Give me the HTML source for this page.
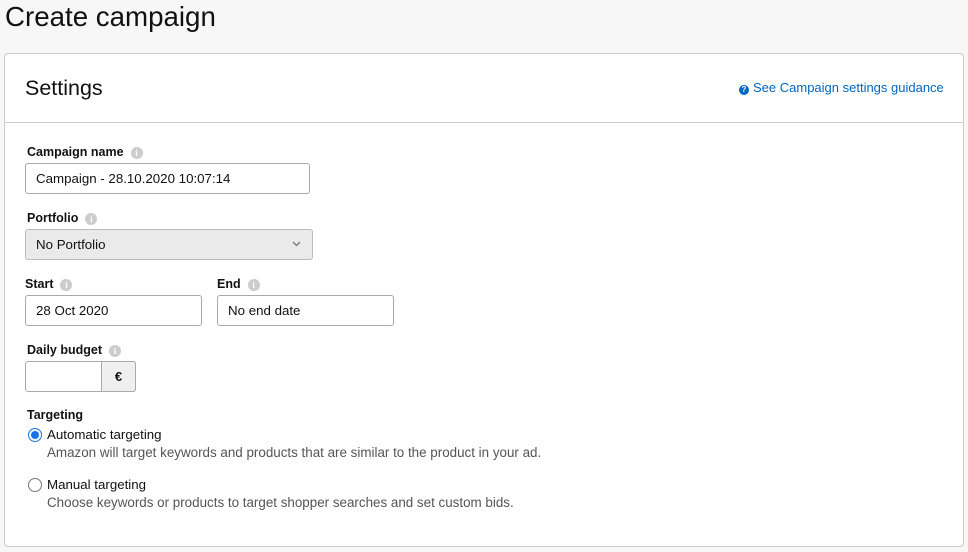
<!DOCTYPE html>
<html><head><style>
*{box-sizing:border-box;margin:0;padding:0}
body{width:968px;height:552px;background:#f7f7f7;font-family:"Liberation Sans",sans-serif;color:#111;position:relative;overflow:hidden}
.a{position:absolute}
h1{position:absolute;left:5px;top:1px;font-size:27.7px;font-weight:normal;color:#111}
.card{position:absolute;left:4px;top:53px;width:960px;height:494px;background:#fff;border:1px solid #ccc;border-radius:4px}
.hr{position:absolute;left:0;right:0;top:68px;border-top:1px solid #ccc}
.lbl{position:absolute;font-size:12.5px;font-weight:bold;color:#111}
.info{display:inline-block;width:12px;height:12px;border-radius:50%;background:#ccc;color:#fff;font-size:9px;text-align:center;line-height:12px;vertical-align:0px;margin-left:7px;font-weight:bold;font-family:"Liberation Serif",serif}
.inp{position:absolute;border:1px solid #aaa;border-radius:3px;background:#fff;font-size:13.3px;padding-left:10px;line-height:29px;height:31px}
.t{position:absolute;font-size:13.3px;color:#111}
.s{position:absolute;font-size:13.4px;color:#555}
.radio{position:absolute;width:14px;height:14px;border-radius:50%;border:1px solid #777;background:#fff}
</style></head><body>
<h1>Create campaign</h1>
<div class="card">
<div class="a" style="left:20px;top:22px;font-size:21.5px;color:#111">Settings</div>
<div class="a" style="left:734px;top:26px;font-size:13px;color:#0066c0"><span style="display:inline-block;width:10px;height:10px;border-radius:50%;background:#0066c0;color:#fff;font-size:8px;line-height:10px;text-align:center;font-weight:bold;vertical-align:0px;margin-right:4px">?</span>See Campaign settings guidance</div>
<div class="hr"></div>
</div>
<div class="lbl" style="left:27px;top:145px">Campaign name<span class="info">i</span></div>
<div class="inp" style="left:25px;top:163px;width:285px">Campaign - 28.10.2020 10:07:14</div>
<div class="lbl" style="left:27px;top:211px">Portfolio<span class="info">i</span></div>
<div class="inp" style="left:25px;top:229px;width:288px;background:#eaeaea;border-color:#bbb">No Portfolio</div>
<svg class="a" style="left:292px;top:241px" width="9" height="6"><path d="M1 1l3.5 3.5L8 1" stroke="#777" stroke-width="1.3" fill="none"/></svg>
<div class="lbl" style="left:25px;top:277px">Start<span class="info">i</span></div>
<div class="inp" style="left:25px;top:295px;width:177px">28 Oct 2020</div>
<div class="lbl" style="left:217px;top:277px">End<span class="info">i</span></div>
<div class="inp" style="left:217px;top:295px;width:177px">No end date</div>
<div class="lbl" style="left:27px;top:343px">Daily budget<span class="info">i</span></div>
<div class="inp" style="left:25px;top:361px;width:111px"></div>
<div class="a" style="left:101px;top:361px;width:35px;height:31px;background:#efefef;border:1px solid #aaa;border-radius:0 3px 3px 0;text-align:center;line-height:29px;font-size:13px;font-weight:bold">€</div>
<div class="lbl" style="left:27px;top:408px">Targeting</div>
<div class="radio" style="left:28px;top:428px;border:1px solid #1a73e8"><div style="position:absolute;left:2px;top:2px;width:8px;height:8px;border-radius:50%;background:#1a73e8"></div></div>
<div class="t" style="left:47px;top:427px">Automatic targeting</div>
<div class="s" style="left:47px;top:445px">Amazon will target keywords and products that are similar to the product in your ad.</div>
<div class="radio" style="left:28px;top:478px"></div>
<div class="t" style="left:47px;top:477px">Manual targeting</div>
<div class="s" style="left:47px;top:495px">Choose keywords or products to target shopper searches and set custom bids.</div>
</body></html>
